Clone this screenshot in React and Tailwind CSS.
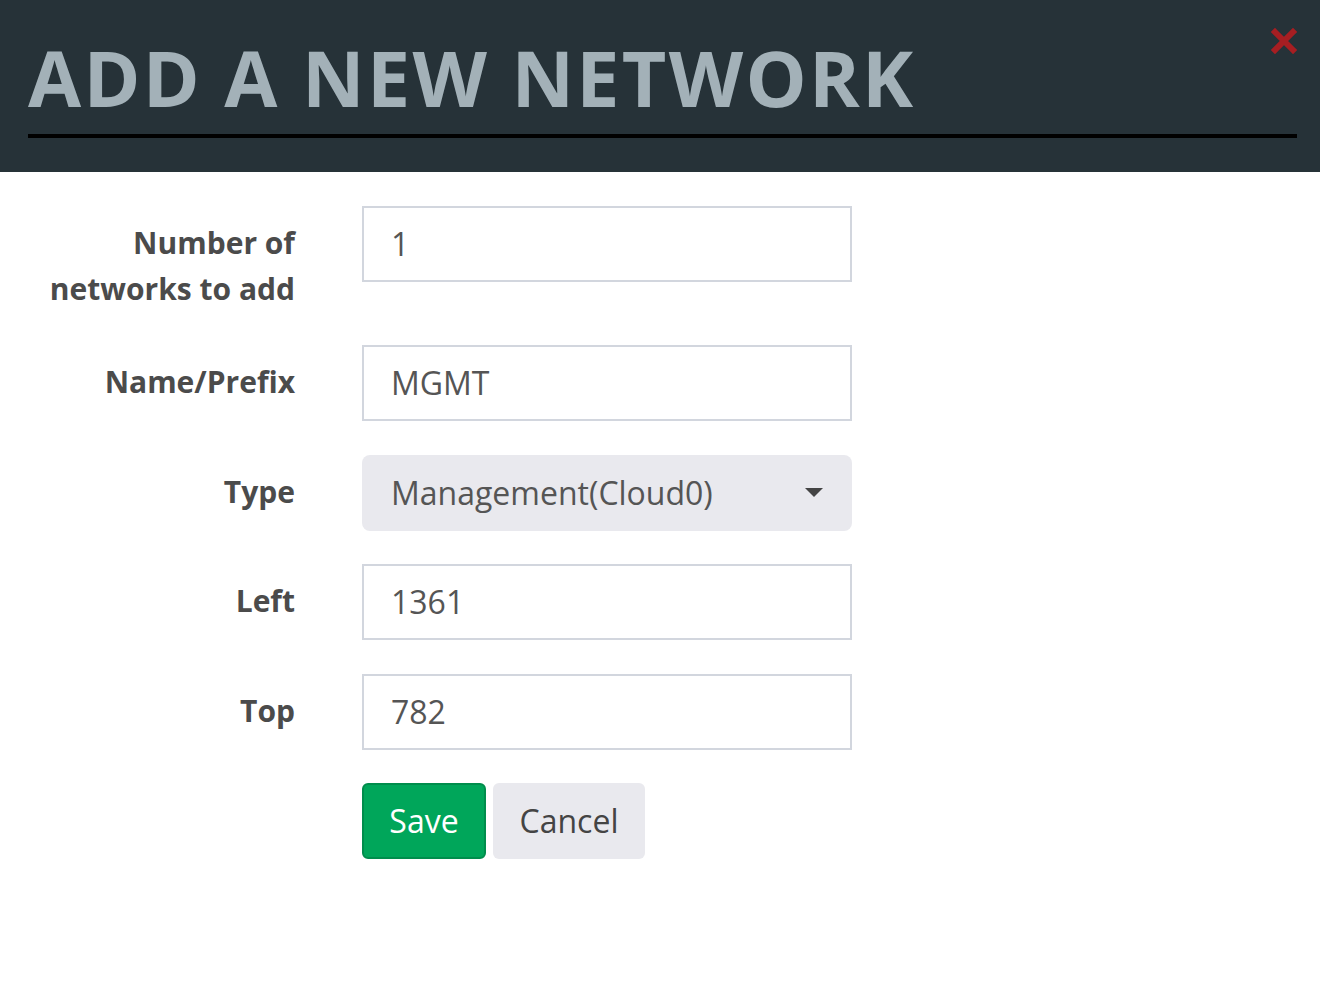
import React from "react";

function Row({ label, children, first }) {
  return (
    <div className={first ? "flex h-[105.5px] items-start" : "flex items-start"}>
      <div className="w-[295px] shrink-0 pt-[14px] text-right text-[30px] font-bold leading-[46px] text-[#4b4b4b]">
        {label}
      </div>
      <div className="ml-[67px] w-[490px] shrink-0">{children}</div>
    </div>
  );
}

function TextInput({ value }) {
  return (
    <div className="flex h-[76px] w-full items-center border-2 border-[#d2d6de] bg-white pl-[27px] text-[32px] text-[#555]">
      {value}
    </div>
  );
}

export default function App() {
  return (
    <div
      className="min-h-screen bg-white"
      style={{ fontFamily: '"Open Sans", "Noto Sans", sans-serif' }}
    >
      <div className="relative h-[172px] bg-[#263238] pl-[28px] pr-[23px] pt-[39px]">
        <h1 className="whitespace-nowrap text-[77px] font-bold leading-none tracking-[2.3px] text-[#a3b1b8]">
          ADD A NEW NETWORK
        </h1>
        <div className="mt-[18px] h-[4px] bg-black" />
        <button className="absolute right-[23px] top-[28px] h-[26px] w-[26px]">
          <svg viewBox="0 0 26 26" className="h-[26px] w-[26px]">
            <path
              d="M4 4 L22 22 M22 4 L4 22"
              stroke="#a61e22"
              strokeWidth="6"
              strokeLinecap="square"
              fill="none"
            />
          </svg>
        </button>
      </div>

      <div className="flex flex-col gap-[33.5px] pt-[34px]">
        <Row first label={<>Number of<br />networks to add</>}>
          <TextInput value="1" />
        </Row>
        <Row label="Name/Prefix">
          <TextInput value="MGMT" />
        </Row>
        <Row label="Type">
          <div className="flex h-[76px] w-full items-center justify-between rounded-[8px] bg-[#e9e9ee] pl-[29px] pr-[29px] text-[32px] text-[#555]">
            <span>Management(Cloud0)</span>
            <svg width="18" height="9" viewBox="0 0 18 9">
              <path d="M0 0 H18 L9 9 Z" fill="#444" />
            </svg>
          </div>
        </Row>
        <Row label="Left">
          <TextInput value="1361" />
        </Row>
        <Row label="Top">
          <TextInput value="782" />
        </Row>
        <div className="flex items-start">
          <div className="w-[295px] shrink-0" />
          <div className="ml-[67px] flex gap-[7px]">
            <button className="flex h-[76px] w-[124px] items-center justify-center rounded-[6px] border-2 border-[#008d4c] bg-[#00a65a] text-[32px] text-white">
              Save
            </button>
            <button className="flex h-[76px] w-[152px] items-center justify-center rounded-[6px] bg-[#e9e9ee] text-[32px] text-[#444]">
              Cancel
            </button>
          </div>
        </div>
      </div>
    </div>
  );
}
